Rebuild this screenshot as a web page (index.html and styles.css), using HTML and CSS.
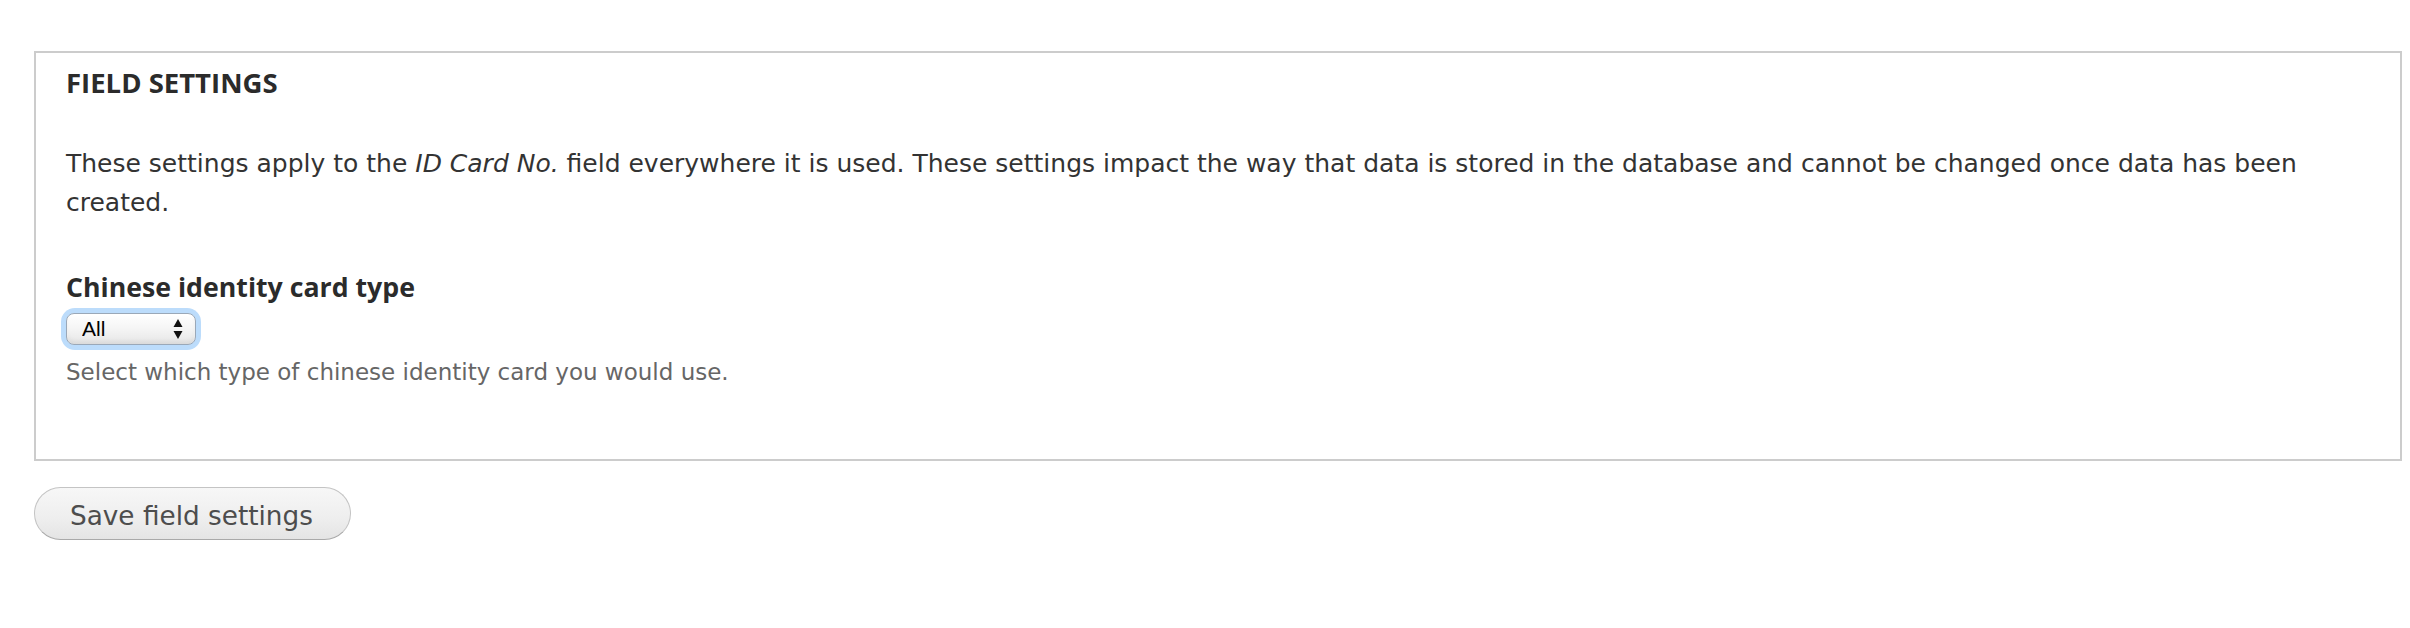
FILE: index.html
```html
<!DOCTYPE html>
<html lang="en">
<head>
<meta charset="utf-8">
<title>Field settings</title>
<link rel="stylesheet" href="styles.css">
</head>
<body>
<div class="page">
  <form class="form">
    <div class="fieldset">
      <div class="legend">FIELD SETTINGS</div>
      <p class="intro">These settings apply to the <em class="field-name">ID Card No.</em> field everywhere it is used. These settings impact the way that data is stored in the database and cannot be changed once data has been created.</p>
      <div class="form-item">
        <label class="label" for="card-type">Chinese identity card type</label>
        <div class="select-wrap">
          <select id="card-type" class="select">
            <option>All</option>
          </select>
          <svg class="select-arrows" width="10" height="22" viewBox="0 0 10 22" aria-hidden="true">
            <path d="M5 1 L9.5 9 L0.5 9 Z" fill="#111"/>
            <path d="M5 21 L9.5 13 L0.5 13 Z" fill="#111"/>
          </svg>
        </div>
        <div class="description">Select which type of chinese identity card you would use.</div>
      </div>
    </div>
    <div class="actions">
      <button type="button" class="button">Save field settings</button>
    </div>
  </form>
</div>
</body>
</html>
```
FILE: styles.css
```css
html, body {
  margin: 0;
  padding: 0;
  background: #ffffff;
}

body {
  font-family: "DejaVu Sans", "Noto Sans", sans-serif;
  color: #333333;
}

.page {
  padding: 51px 8px 0 34px;
}

.fieldset {
  border: 2px solid #cccccc;
  padding: 13px 30px 71px 30px;
}

.legend {
  font-family: "Open Sans", "Noto Sans", sans-serif;
  font-size: 27.5px;
  line-height: 33px;
  font-weight: 700;
  color: #2b2b2b;
}

.intro {
  margin: 45px 0 0 0;
  font-size: 25px;
  line-height: 39px;
  color: #333333;
}

.field-name {
  font-style: italic;
}

.form-item {
  margin-top: 47px;
}

.label {
  display: block;
  font-family: "Open Sans", "Noto Sans", sans-serif;
  font-size: 26.7px;
  line-height: 36px;
  font-weight: 700;
  color: #2b2b2b;
}

.select-wrap {
  position: relative;
  display: inline-block;
  vertical-align: top;
  margin-top: 8px;
  border-radius: 9px;
  box-shadow: 0 0 0 5px #bcdcfb;
}

.select {
  -webkit-appearance: none;
  appearance: none;
  display: block;
  width: 130px;
  height: 32px;
  margin: 0;
  padding: 0 0 0 15px;
  border: 1px solid #9aa8b8;
  border-radius: 8px;
  background: linear-gradient(#ffffff 0%, #f6f6f6 45%, #e6e6e6 100%);
  box-shadow: inset 0 -3px 4px rgba(0, 0, 0, 0.06), inset 0 2px 3px rgba(255, 255, 255, 0.9);
  font-family: "Liberation Sans", Arial, sans-serif;
  font-size: 21px;
  line-height: 30px;
  color: #000000;
  outline: none;
}

.select-arrows {
  position: absolute;
  left: 107px;
  top: 5px;
  pointer-events: none;
}

.description {
  margin-top: 11px;
  font-size: 23px;
  line-height: 32px;
  color: #666666;
}

.actions {
  margin-top: 26px;
}

.button {
  display: inline-block;
  height: 53px;
  margin: 0;
  padding: 5px 37px 0 35px;
  border: 1px solid #c4c4c4;
  border-bottom-color: #a9a9a9;
  border-radius: 30px;
  background: linear-gradient(#f7f7f7 0%, #eeeeee 60%, #e4e4e4 100%);
  font-family: "DejaVu Sans", "Noto Sans", sans-serif;
  font-size: 26.3px;
  line-height: 46px;
  color: #4d4d4d;
  cursor: pointer;
}
```
